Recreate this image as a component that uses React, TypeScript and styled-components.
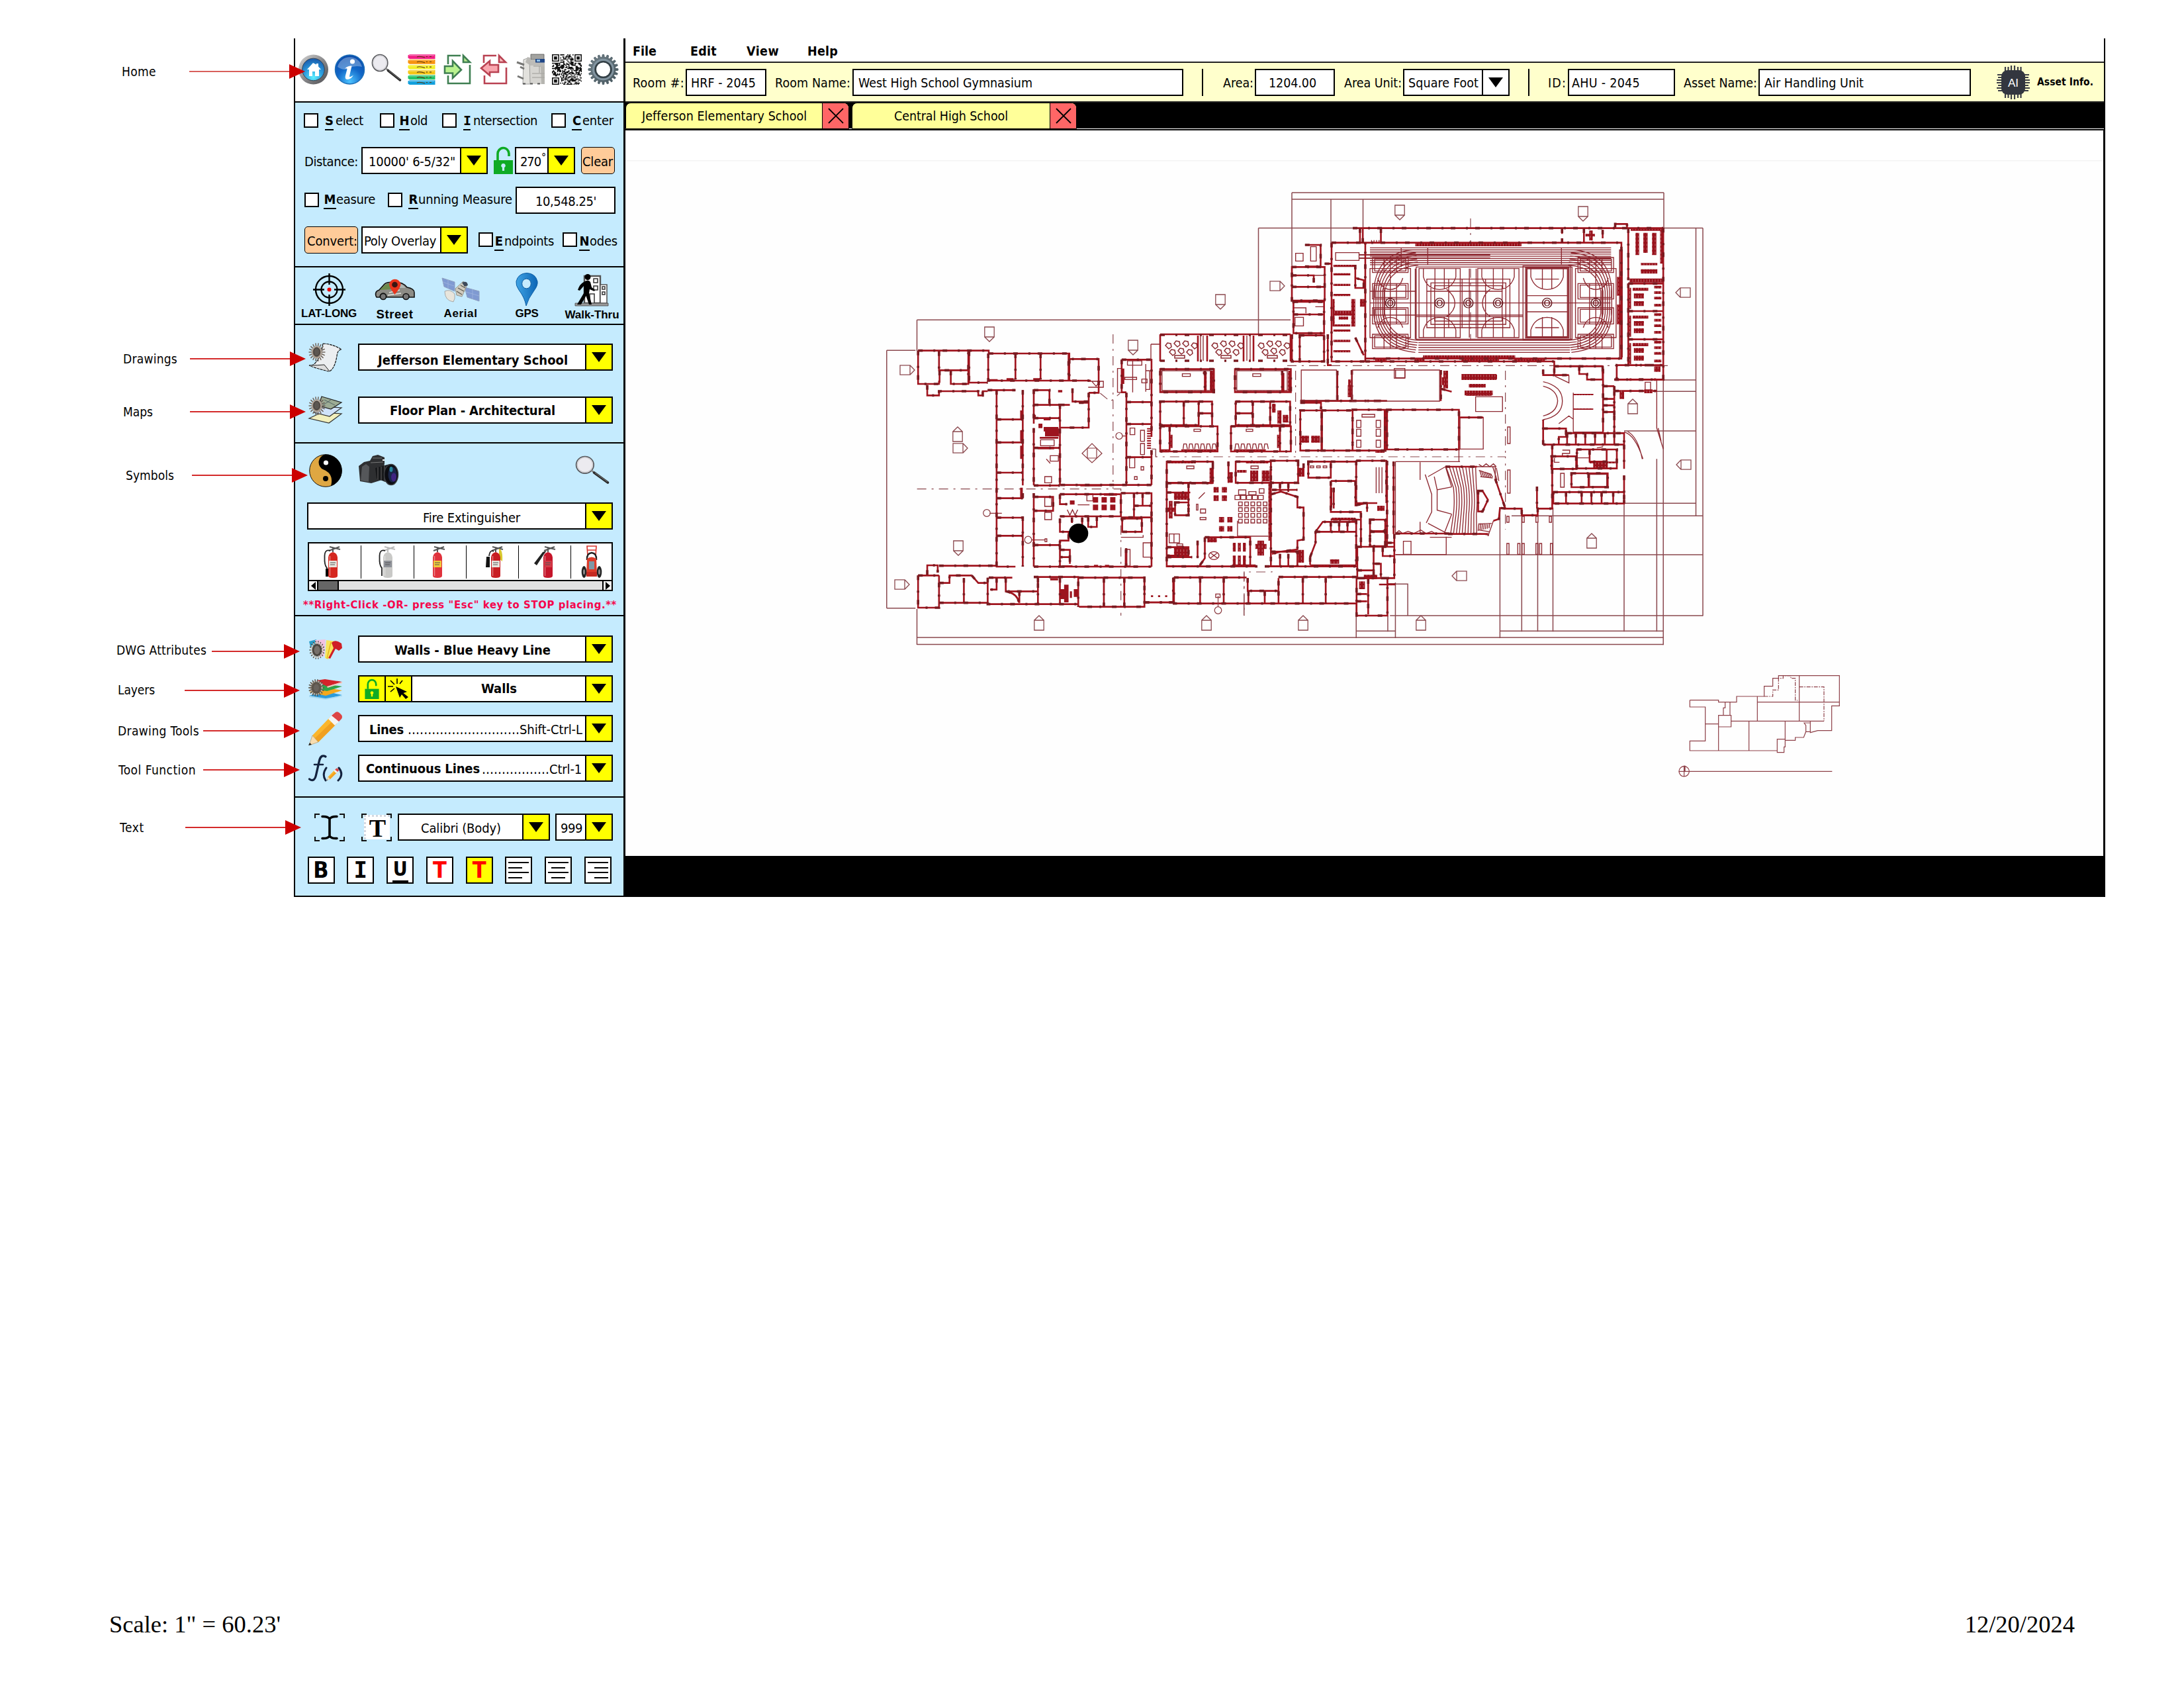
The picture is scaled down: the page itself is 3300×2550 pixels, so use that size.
import React, { useLayoutEffect, useRef, useState } from "react";
import styled, { createGlobalStyle, css } from "styled-components";

const GlobalStyle = createGlobalStyle`
  * { box-sizing: border-box; }
  body { margin: 0; background: #fff; color: #000; font-family: "DejaVu Sans Condensed", "DejaVu Sans", sans-serif; }
  svg { display: block; overflow: visible; flex: none; }
`;

/* ---------- text ---------- */

const Slot = styled.span<{ $w: number; $ml?: number; $dy?: number }>`
  display: block;
  flex: none;
  width: ${(p) => p.$w}px;
  margin-left: ${(p) => p.$ml ?? 0}px;
  padding-top: ${(p) => Math.max(0, (p.$dy ?? 0) * 2)}px;
  padding-bottom: ${(p) => Math.max(0, -(p.$dy ?? 0) * 2)}px;
  line-height: 1;
  white-space: pre;
`;

const Run = styled.span<{ $size: number; $bold?: boolean; $color?: string; $family?: string }>`
  display: inline-block;
  line-height: 1;
  font-size: ${(p) => p.$size}px;
  font-weight: ${(p) => (p.$bold ? 700 : 400)};
  color: ${(p) => p.$color ?? "#000"};
  ${(p) => p.$family && css`font-family: ${p.$family};`}
`;

type FitProps = {
  w: number;
  ml?: number;
  dy?: number;
  size?: number;
  bold?: boolean;
  color?: string;
  family?: string;
  children: string;
};

/* Tracks its text so that it fills the given width exactly. */
function Fit({ w, ml, dy, size = 20, bold, color, family, children }: FitProps) {
  const ref = useRef<HTMLSpanElement>(null);
  const [tracking, setTracking] = useState(0);
  useLayoutEffect(() => {
    const el = ref.current;
    if (!el) return;
    el.style.letterSpacing = "0px";
    setTracking((w - el.getBoundingClientRect().width) / Math.max(1, children.length));
  }, [w, children]);
  return (
    <Slot $w={w} $ml={ml} $dy={dy}>
      <Run ref={ref} $size={size} $bold={bold} $color={color} $family={family} style={{ letterSpacing: `${tracking}px` }}>
        {children}
      </Run>
    </Slot>
  );
}

const ARIAL = '"Liberation Sans", Arial, sans-serif';

/* ---------- page ---------- */

const Page = styled.main`
  width: 3300px;
  height: 2550px;
  padding-top: 58px;
  display: flex;
  flex-direction: column;
  background: #fff;
  overflow: hidden;
`;
const Workspace = styled.div`
  display: flex;
  height: 1297px;
  flex: none;
`;
const Footer = styled.footer`
  margin-top: 1078px;
  padding: 0 165px;
  display: flex;
  justify-content: space-between;
  font-family: "Liberation Serif", serif;
  font-size: 36.5px;
  line-height: 42px;
`;

/* ---------- callouts ---------- */

const CalloutColumn = styled.aside`
  width: 444px;
  flex: none;
  position: relative;
  z-index: 2;
`;
const CalloutRow = styled.div<{ $gap: number }>`
  display: flex;
  align-items: center;
  height: 24px;
  margin-top: ${(p) => p.$gap}px;
`;
const Shaft = styled.i<{ $w: number; $ml: number; $soft?: boolean }>`
  flex: none;
  height: 2px;
  width: ${(p) => p.$w}px;
  margin-left: ${(p) => p.$ml}px;
  background: ${(p) => (p.$soft ? "#d9605c" : "#d42a2a")};
`;
const Head = styled.i`
  flex: none;
  border-left: 24px solid #cc0000;
  border-top: 11.5px solid transparent;
  border-bottom: 11.5px solid transparent;
`;

const callouts = [
  { t: "Home", x: 184, w: 52, y: 108, from: 286, head: 437, dy: 0 },
  { t: "Drawings", x: 186, w: 82, y: 542, from: 287, head: 438, dy: 0 },
  { t: "Maps", x: 186, w: 45, y: 622, from: 287, head: 438, dy: 0 },
  { t: "Symbols", x: 190, w: 73, y: 718, from: 290, head: 441, dy: 0 },
  { t: "DWG Attributes", x: 176, w: 136, y: 984, from: 320, head: 429, dy: -1.5 },
  { t: "Layers", x: 178, w: 56, y: 1043, from: 279, head: 429, dy: -0.5 },
  { t: "Drawing Tools", x: 178, w: 123, y: 1104, from: 307, head: 429, dy: 0 },
  { t: "Tool Function", x: 179, w: 117, y: 1163, from: 307, head: 429, dy: 0 },
  { t: "Text", x: 181, w: 37, y: 1250, from: 280, head: 431, dy: 0 },
];

function Callouts() {
  let cursor = 58;
  return (
    <CalloutColumn>
      {callouts.map((c, i) => {
        const gap = c.y - 12 - cursor;
        cursor = c.y + 12;
        return (
          <CalloutRow key={c.t} $gap={gap}>
            <Fit w={c.w} ml={c.x} dy={c.dy} size={19}>{c.t}</Fit>
            <Shaft $ml={c.from - c.x - c.w} $w={c.head - c.from} $soft={i === 0} />
            <Head />
          </CalloutRow>
        );
      })}
    </CalloutColumn>
  );
}

/* ---------- controls ---------- */

const Sidebar = styled.nav`
  width: 501px;
  flex: none;
  background: #c5ebfe;
  border-left: 2px solid #000;
  border-right: 3px solid #000;
`;
const Section = styled.section<{ $h: number; $bg?: string; $pt?: number }>`
  height: ${(p) => p.$h}px;
  padding-top: ${(p) => p.$pt ?? 0}px;
  background: ${(p) => p.$bg ?? "transparent"};
  border-bottom: 2px solid #000;
`;
const Row = styled.div<{ $h?: number; $mt?: number; $pl?: number }>`
  display: flex;
  align-items: center;
  height: ${(p) => p.$h ?? 41}px;
  margin-top: ${(p) => p.$mt ?? 0}px;
  padding-left: ${(p) => p.$pl ?? 0}px;
`;
const Tools = styled.div`
  display: flex;
  gap: 9.75px;
  padding: 24px 0 0 5px;
`;
const Check = styled.i<{ $ml?: number }>`
  flex: none;
  width: 22px;
  height: 22px;
  margin-left: ${(p) => p.$ml ?? 0}px;
  background: #fff;
  border: 2px solid #000;
`;
const Box = styled.div<{ $w: number; $ml?: number }>`
  flex: none;
  display: flex;
  align-items: center;
  width: ${(p) => p.$w}px;
  height: 41px;
  margin-left: ${(p) => p.$ml ?? 0}px;
  background: #fff;
  border: 2px solid #000;
`;
const PeachButton = styled.button<{ $w: number; $ml?: number }>`
  flex: none;
  display: flex;
  align-items: center;
  width: ${(p) => p.$w}px;
  height: 41px;
  padding: 0;
  margin-left: ${(p) => p.$ml ?? 0}px;
  background: #ffcb99;
  border: 1.5px solid #000;
  border-radius: 5px;
  font-family: inherit;
`;
const DropCell = styled.span<{ $bg?: string }>`
  flex: none;
  display: flex;
  align-items: center;
  justify-content: center;
  width: 40px;
  height: 100%;
  margin-left: auto;
  background: ${(p) => p.$bg ?? "#ffff00"};
  border-left: 2px solid #000;
`;
const Caret = styled.i`
  border-top: 15px solid #000;
  border-left: 11.5px solid transparent;
  border-right: 11.5px solid transparent;
`;
const LeadCell = styled.span`
  flex: none;
  display: flex;
  align-items: center;
  justify-content: center;
  width: 40px;
  height: 100%;
  background: #ffff00;
  border-right: 2px solid #000;
`;
const IconSlot = styled.span<{ $w: number; $ml?: number }>`
  flex: none;
  display: flex;
  align-items: center;
  width: ${(p) => p.$w}px;
  height: 41px;
  margin-left: ${(p) => p.$ml ?? 0}px;
`;

function Select({ w, ml, bg, children }: { w: number; ml?: number; bg?: string; children: React.ReactNode }) {
  return (
    <Box $w={w} $ml={ml}>
      {children}
      <DropCell $bg={bg}><Caret /></DropCell>
    </Box>
  );
}

const HotWrap = styled.span<{ $ml: number; $dy: number }>`
  flex: none;
  display: flex;
  margin-left: ${(p) => p.$ml}px;
  padding-top: ${(p) => Math.max(0, p.$dy * 2)}px;
  padding-bottom: ${(p) => Math.max(0, -p.$dy * 2)}px;
`;
const HotKey = styled.b<{ $w: number; $slab?: boolean }>`
  width: ${(p) => p.$w}px;
  flex: none;
  text-align: center;
  font-size: 20px;
  line-height: 20px;
  border-bottom: 2px solid #000;
  height: 25px;
  margin-bottom: -5px;
  ${(p) => p.$slab && css`font-family: "DejaVu Sans Mono", monospace;`}
`;
function Hot({ k, kw, gap, rest, w, ml, dy = 0 }: { k: string; kw: number; gap: number; rest: string; w: number; ml: number; dy?: number }) {
  return (
    <HotWrap $ml={ml} $dy={dy}>
      <HotKey $w={kw} $slab={k === "I"}>{k}</HotKey>
      <Fit w={w} ml={gap}>{rest}</Fit>
    </HotWrap>
  );
}

/* ---------- icons ---------- */

const gearPath = (cx: number, cy: number, r1: number, r2: number, n: number, ky = 1) => {
  let d = "";
  for (let i = 0; i < n; i++) {
    [[-0.3, r1], [-0.17, r2], [0.17, r2], [0.3, r1]].forEach(([o, r], j) => {
      const a = ((i + o) / n) * Math.PI * 2;
      d += `${i + j === 0 ? "M" : "L"}${(cx + Math.cos(a) * r).toFixed(2)} ${(cy + Math.sin(a) * r * ky).toFixed(2)}`;
    });
  }
  return d + "Z";
};

const HomeIcon = () => (
  <svg width="45" height="46" viewBox="0 0 45 46">
    <defs>
      <linearGradient id="hr" x1="0" y1="0" x2="1" y2="1"><stop offset="0" stopColor="#d8d8d8" /><stop offset=".5" stopColor="#8a8a8c" /><stop offset="1" stopColor="#4c4c50" /></linearGradient>
      <radialGradient id="hb" cx=".5" cy=".85" r=".8"><stop offset="0" stopColor="#5ff0ff" /><stop offset=".5" stopColor="#2da0e0" /><stop offset="1" stopColor="#1a5fb0" /></radialGradient>
    </defs>
    <circle cx="22.5" cy="23" r="22.5" fill="url(#hr)" />
    <circle cx="22.5" cy="23" r="16.8" fill="url(#hb)" stroke="#345" />
    <path d="M22 13l-9 10h3v10h5v-7h4v7h6V23h3l-4-4.500v-4.500h-3v1.500z" fill="#fff" />
  </svg>
);
const InfoIcon = () => (
  <svg width="45" height="46" viewBox="0 0 45 46">
    <defs><radialGradient id="ib" cx=".5" cy=".9" r=".9"><stop offset="0" stopColor="#4cc3ff" /><stop offset=".5" stopColor="#1268c8" /><stop offset="1" stopColor="#0a48a8" /></radialGradient></defs>
    <circle cx="22.500" cy="23" r="22" fill="url(#ib)" stroke="#1d6fb8" strokeWidth="1.500" />
    <path d="M4 19A19 19 0 0 1 41 19Q30 16 22 21T4 19Z" fill="#fff" opacity=".3" />
    <circle cx="26.500" cy="11" r="3.600" fill="#fff" />
    <path d="M15 21.500Q20 17 25.500 17.500L22 33Q21.500 36 28 31.500Q24 38.500 18.500 38Q14.500 37.500 16 32L18.500 22.500Q19 20.500 15 21.500Z" fill="#fff" />
  </svg>
);
const Magnifier = ({ w, h }: { w: number; h: number }) => (
  <svg width={w} height={h} viewBox="0 0 48 42" preserveAspectRatio="none">
    <circle cx="14" cy="13" r="12.500" fill="#ecebf0" stroke="#55565a" strokeWidth="1.600" />
    <circle cx="14" cy="13" r="10.800" fill="none" stroke="#c8c8cc" />
    <path d="M23 21l5 4" stroke="#888" strokeWidth="2.500" />
    <path d="M27 24.500L46.500 39" stroke="#2a2a2a" strokeWidth="3.600" strokeLinecap="round" />
    <path d="M28 24.500L46 38" stroke="#777" strokeWidth="1" />
  </svg>
);
const MarkersIcon = () => (
  <svg width="45" height="46" viewBox="0 0 45 46">
    {["#f21d84", "#f7930f", "#f3ef27", "#f6c515", "#25c36a", "#12a0dc"].map((c, i) => (
      <g key={c} transform={`translate(0 ${i * 7.8})`}>
        <path d="M1.500 1.500L4 .3H42.500V7H4L1.500 5.500Z" fill={c} />
        <path d="M3 1.700H41" stroke="#fff" strokeWidth="1.200" opacity=".4" />
        <path d="M15 4q4 -2 12 1M29 3.500h2M34 3.500h3" stroke="#5a3a10" strokeWidth="1.100" fill="none" />
      </g>
    ))}
  </svg>
);
const ExportIcon = () => (
  <svg width="45" height="46" viewBox="0 0 45 46">
    <g fill="none" stroke="#3f7f52" strokeWidth="2.600">
      <path d="M7 15V2H26M40 16V44H7V32" />
      <path d="M30 2L40 12H30Z" fill="#b9e88f" />
      <path d="M2 18H14V10L27 23.500L14 36V28.500H2Z" fill="#b9f28f" />
    </g>
  </svg>
);
const ImportIcon = () => (
  <svg width="45" height="46" viewBox="0 0 45 46">
    <g fill="none" stroke="#b94252" strokeWidth="2.600">
      <path d="M6 13V2H25M40 20V44H7V32" />
      <path d="M29 2L39 12H29Z" fill="#fbc0c0" />
      <path d="M28 16H15V10L2 21L15 32V27H28Z" fill="#f9a6ae" />
    </g>
  </svg>
);
const CopierIcon = () => (
  <svg width="45" height="46" viewBox="0 0 45 46">
    <path d="M22 0H42V8H22Z" fill="#a3a3a0" stroke="#555" strokeWidth=".8" />
    <path d="M20 8H43V18H21Z" fill="#bdbcb8" />
    <path d="M29 7H43V12.500H29Z" fill="#1f4686" />
    <path d="M31 8H36V11H31Z" fill="#8fc0e8" />
    <path d="M19 17H43V45H21Z" fill="#d6d5d1" />
    <path d="M26 18H43M24 29H43M24 35H43M35 18V28" stroke="#9c9b97" strokeWidth="1" />
    <path d="M37 19H43V45H38Z" fill="#a8a7a3" opacity=".7" />
    <path d="M11 8L20 5L21 45H10Z" fill="#e2e1dd" stroke="#8c8c8a" strokeWidth=".8" />
    <path d="M17 4L22 6L20 16L14 12Z" fill="#b9b8b4" />
    <path d="M1 12L12 16M6 19L12 22M2 33L11 37" stroke="#777775" strokeWidth="3" />
    <path d="M10 44.500H43" stroke="#555" strokeWidth="2" strokeDasharray="4 7" />
  </svg>
);
const qrCells = (() => {
  let d = "";
  const n = 29;
  const finder = (x: number, y: number) => (x < 8 && y < 8) || (x > n - 9 && y < 8) || (x < 8 && y > n - 9);
  let s = 71;
  for (let y = 0; y < n; y++)
    for (let x = 0; x < n; x++) {
      s = (s * 1103515245 + 12345) % 2147483648;
      if (!finder(x, y) && (s >> 12) % 100 < 55) d += `M${x} ${y}h1.050v1.050h-1.050z`;
    }
  [[0, 0], [n - 7, 0], [0, n - 7]].forEach(([x, y]) => {
    d += `M${x} ${y}h7v7h-7zM${x + 1} ${y + 1}v5h5v-5zM${x + 2} ${y + 2}h3v3h-3z`;
  });
  return d;
})();
const QrIcon = () => (
  <svg width="45" height="46" viewBox="0 0 29 29" preserveAspectRatio="none"><path d={qrCells} fill="#111" /></svg>
);
const GearIcon = () => (
  <svg width="45" height="46" viewBox="0 0 45 46">
    <defs><linearGradient id="gg" x1="0" y1="0" x2="1" y2="1"><stop offset="0" stopColor="#75848c" /><stop offset="1" stopColor="#43535a" /></linearGradient></defs>
    <path d={gearPath(22.5, 23, 18.5, 22.5, 20)} fill="url(#gg)" stroke="#55656d" />
    <circle cx="22.500" cy="23" r="14.800" fill="none" stroke="#8294a0" strokeWidth="3" />
    <circle cx="22.500" cy="23" r="11.800" fill="none" stroke="#333f45" strokeWidth="2.600" />
    <circle cx="22.500" cy="23" r="10.500" fill="#fff" />
  </svg>
);
const Lock = ({ w, h, hole }: { w: number; h: number; hole: string }) => (
  <svg width={w} height={h} viewBox="0 0 29 41">
    <path d="M6 20V11A8.500 9 0 0 1 23 10V14" fill="none" stroke="#0fab24" strokeWidth="3.600" />
    <path d="M0 20H29V41H0Z" fill="#0fab24" />
    <path d="M14.500 25a3.200 3.200 0 0 1 1.600 6V36h-3.200V31a3.200 3.200 0 0 1 1.600-6z" fill={hole} />
  </svg>
);
const ReticleIcon = () => (
  <svg width="49" height="51" viewBox="0 0 49 51">
    <g fill="none" stroke="#000" strokeWidth="2.400"><circle cx="24.500" cy="25.500" r="20.500" /><circle cx="24.500" cy="25.500" r="12" />
      <path d="M24.500 1V18M24.500 33V50M0 25.500H17M32 25.500H49" /></g>
    <circle cx="24.500" cy="25.500" r="3" fill="#e00" />
  </svg>
);
const CarIcon = () => (
  <svg width="61" height="51" viewBox="0 0 61 51">
    <path d="M2 35Q0 28 7 26L15 17Q18 14 30 14Q43 14 49 22Q60 24 60 30V37H52A5 6 0 0 0 43 37H18A5 6 0 0 0 8 37H3Z" fill="#8d8c86" stroke="#111" strokeWidth="1.600" />
    <path d="M8 26L16 18Q20 16 25 16V25Z" fill="#6d8a4c" />
    <path d="M36 16Q43 17 47 23H37Z" fill="#b0b5b2" />
    <path d="M22 30L38 26M20 34L40 31" stroke="#e5e5e0" strokeWidth="1.400" />
    <circle cx="13" cy="36" r="4.500" fill="#777" stroke="#111" strokeWidth="1.600" /><circle cx="47.500" cy="36" r="4.500" fill="#777" stroke="#111" strokeWidth="1.600" />
    <path d="M30.500 33Q22 22 22 17.500A8.800 8.800 0 0 1 39.500 17.500Q39.500 22 30.500 33Z" fill="#e8341c" />
    <circle cx="30.500" cy="18" r="4.300" fill="#3a1512" />
  </svg>
);
const SatelliteIcon = () => (
  <svg width="56" height="51" viewBox="0 0 56 51">
    <path d="M0 8L19 14V28L3 21Z" fill="#7f9ad2" stroke="#8fa0c0" /><path d="M34 22L56 28V43L38 37Z" fill="#7f9ad2" stroke="#8fa0c0" />
    <path d="M1 14L18 20M9 10V24M36 29L56 35M46 25V40" stroke="#9fb4dd" strokeWidth=".8" />
    <path d="M20 24L32 13L38 18L30 36L22 34Z" fill="#cfcabd" stroke="#88857a" strokeWidth=".8" />
    <path d="M30 15Q38 11 39 19L34 21Z" fill="#3e4a5a" /><path d="M24 23L33 28M28 19L35 23M22 28L30 33" stroke="#5d5a50" strokeWidth="1.400" />
    <path d="M4 28Q12 24 19 32Q20 40 17 44Q4 42 4 28Z" fill="#e8e5dc" stroke="#999" strokeWidth=".8" />
  </svg>
);
const PinIcon = () => (
  <svg width="34" height="51" viewBox="0 0 34 51">
    <defs><linearGradient id="pg"><stop offset="0" stopColor="#3fa3e4" /><stop offset="1" stopColor="#0c65b5" /></linearGradient></defs>
    <path d="M16 50Q14 38 5 26Q0 19 1 13Q4 1 17 .5Q30 1 33 13Q34 19 28 27Q19 39 16 50Z" fill="url(#pg)" stroke="#0a5ca4" />
    <ellipse cx="16.500" cy="16.500" rx="6.800" ry="7.400" fill="#c5ebfe" stroke="#0b589c" />
  </svg>
);
const WalkIcon = () => (
  <svg width="51" height="51" viewBox="0 0 51 51">
    <path d="M14 5H38V46H14Z" fill="#fff" stroke="#555" strokeWidth="2.400" /><path d="M38 18H48V46H38Z" fill="#fff" stroke="#555" strokeWidth="1.600" />
    <g fill="#fff" stroke="#333" strokeWidth="1.500"><path d="M28 9h6v6h-6zM28 20h6v6h-6zM41 21h4v4h-4zM41 29h4v4h-4zM22 32h7v14h-7z" /></g>
    <path d="M0 46H50V50H0Z" fill="#999" stroke="#444" strokeWidth=".8" />
    <circle cx="19" cy="6.500" r="4.500" /><path d="M13 14Q20 9 23 14L25 22L30 26L29 28L22 25L21 31L25 48H21L16.500 35L9 48H3L13 31V20L7 27L4 26Q7 17 13 14Z" />
  </svg>
);

const SmallGear = () => (
  <>
    <path d={gearPath(13, 14, 7.5, 12.5, 18, 1.1)} fill="#6f645b" />
    <ellipse cx="12.500" cy="14" rx="7" ry="8.500" fill="none" stroke="#b0a498" strokeWidth="2" />
    <ellipse cx="12.500" cy="13.500" rx="4.500" ry="6.200" fill="#5c5651" stroke="#3f3935" />
  </>
);
const DrawingsIcon = () => (
  <svg width="51" height="44" viewBox="0 0 51 44">
    <path d="M22 1Q38 2 50 10Q44 10 43 20Q40 38 32 43Q16 40 1 34Q12 36 20 12Z" fill="#eceef0" stroke="#111" strokeWidth="1.200" strokeDasharray="4 1" />
    <path d="M1 34Q14 34 24 33L32 43" fill="#ddd" stroke="#222" />
    <SmallGear />
  </svg>
);
const MapsIcon = () => (
  <svg width="51" height="42" viewBox="0 0 51 42">
    <path d="M1 33L20 24L50 26L31 40Z" fill="#f2efbd" stroke="#333" strokeWidth="1.200" />
    <path d="M8 24L20 15L50 17L32 30Z" fill="#cfe2fa" stroke="#333" strokeWidth="1.200" />
    <path d="M20 0L50 9L34 19L16 14Z" fill="#9cab94" stroke="#222" strokeWidth="1.200" /><path d="M24 5L40 13M34 5L22 13" stroke="#566" />
    <SmallGear />
  </svg>
);
const YinYang = () => (
  <svg width="50" height="50" viewBox="0 0 50 50">
    <circle cx="25" cy="25" r="24.300" fill="#dfa742" stroke="#111" />
    <path d="M25 .5A24.500 24.500 0 0 1 33 48.200Q36 37 31 30Q28 26 22 23.500A12 12 0 0 1 25 .5Z" />
    <circle cx="25.500" cy="13" r="3.600" fill="#fff" /><circle cx="25" cy="37" r="4" />
  </svg>
);
const CameraIcon = () => (
  <svg width="61" height="47" viewBox="0 0 61 47">
    <path d="M1 17L9 11L18 9L22 2L30 0L40 4V13L36 38L20 43L3 40Z" fill="#2e2f31" />
    <path d="M6 18L12 14L17 18L16 41L4 39Z" fill="#55575a" /><path d="M22 5L36 5M19 12L38 11" stroke="#777" strokeWidth="1.200" />
    <path d="M26 20L48 14L50 44L28 36Z" fill="#17181a" /><path d="M30 19V37M35 18V39M40 17V41" stroke="#555" strokeWidth="1.200" />
    <ellipse cx="50" cy="30" rx="10.500" ry="15.500" fill="#0c0d12" stroke="#3a3c40" strokeWidth="1.500" />
    <ellipse cx="52" cy="30" rx="6.500" ry="11.500" fill="#1a2548" /><ellipse cx="54" cy="34" rx="4" ry="6.500" fill="#3f2480" /><ellipse cx="50" cy="22" rx="2.500" ry="4" fill="#27879c" />
    <path d="M37 7h3v2h-3z" fill="#fff" />
  </svg>
);
const FansIcon = () => (
  <svg width="51" height="32" viewBox="0 0 51 32">
    <path d="M1 4L12 1L12 10L3 12Z" fill="#2a9dc9" /><path d="M10 2L26 1L24 26L16 28Z" fill="#f3c3e2" />
    <path d="M27 2L42 4L40 12L30 31L25 29Z" fill="#f8e45c" /><path d="M34 5L28 30" stroke="#e0b010" strokeWidth="1.200" />
    <path d="M35 6Q40 0 50 7L51 14L46 18L41 15L33 30L30 29L38 14Z" fill="#cf1f27" />
    <g transform="translate(2 2)"><path d={gearPath(11, 15, 7.5, 11.5, 18, 1.2)} fill="#4b463f" /><ellipse cx="11" cy="15" rx="8.500" ry="11" fill="none" stroke="#d8cfc0" strokeWidth="2.500" strokeDasharray="1.800 1.500" /><ellipse cx="11" cy="15" rx="4.500" ry="6.500" fill="#77706a" /></g>
  </svg>
);
const LayersIcon = () => (
  <svg width="51" height="32" viewBox="0 0 51 32">
    <path d="M1 26L25 19L51 25L26 31Z" fill="#2d9cdb" /><path d="M1 28L26 32L51 27V26L26 30L1 26Z" fill="#a7d9f2" />
    <path d="M1 20L25 13L51 18L26 26Z" fill="#f5a81c" /><path d="M1 14L25 8L51 12L28 19Z" fill="#2fa34a" />
    <path d="M12 3L25 1L51 5L28 12Z" fill="#d4232b" /><path d="M28 12L51 5V7L29 14Z" fill="#f4c9c0" />
    <g transform="translate(0 -1)"><path d={gearPath(12, 15, 8, 12, 18, 1.1)} fill="#5d554c" /><ellipse cx="12" cy="15" rx="8.500" ry="10" fill="none" stroke="#b8ad9f" strokeWidth="2.200" strokeDasharray="1.800 1.500" /><ellipse cx="12" cy="15" rx="4" ry="5.500" fill="#6a635d" /></g>
  </svg>
);
const pencilShape = (
  <>
    <path d="M6 36L33 8L43 18L15 46Z" fill="#fbb62c" /><path d="M10 40L38 13L43 18L15 46Z" fill="#f0a020" />
    <path d="M30 11L36 5L46 15L40 21Z" fill="#f4f4f4" /><path d="M35 6L41 1Q44 -1 47 2L50 5Q52 8 50 11L46 15Z" fill="#dd4444" />
    <path d="M6 36L15 46L1 51Z" fill="#f8ddb0" stroke="#a98a50" strokeWidth=".6" /><path d="M2 47L5 50L0 51Z" fill="#222" />
  </>
);
const PencilIcon = () => <svg width="51" height="51" viewBox="0 0 51 51">{pencilShape}</svg>;
const FunctionIcon = () => (
  <svg width="51" height="41" viewBox="0 0 51 41">
    <g fill="none" stroke="#14233f" strokeLinecap="round">
      <path d="M26 3Q19 -1 16.500 9L11.500 31Q9 42 1.500 37" strokeWidth="3.300" /><path d="M9 15H22" strokeWidth="2.600" />
      <path d="M27 20Q20 30 26 39M46 20Q54 30 45 39" strokeWidth="3" />
    </g>
    <g transform="translate(27.500 20.500) scale(.36)">{pencilShape}</g>
  </svg>
);
const corners = "M1 7V1H8M38 1H45V7M45 35V41H38M8 41H1V35";
const CursorIcon = () => (
  <svg width="46" height="42" viewBox="0 0 46 42">
    <path d={corners} fill="none" stroke="#111" strokeWidth="2" />
    <path d="M12 4.500Q20 4 23 8Q26 4 34 4.500M23 8V34M12 37.500Q20 38 23 34Q26 38 34 37.500" fill="none" stroke="#000" strokeWidth="3.600" strokeLinecap="round" />
  </svg>
);
const GlyphBadge = styled.span`
  width: 39px;
  height: 37px;
  background: #fff;
  border: 3px dotted #d4d8e0;
  border-right: 0;
  border-bottom: 0;
  font: 700 38px/42px "Liberation Serif", serif;
  display: flex;
  align-items: center;
  justify-content: center;
`;
const CornerFrame = styled.span`
  display: flex;
  align-items: center;
  justify-content: center;
  width: 46px;
  height: 42px;
  flex: none;
  background:
    linear-gradient(#111, #111) 0 0 / 8px 2px, linear-gradient(#111, #111) 0 0 / 2px 7px,
    linear-gradient(#111, #111) 100% 0 / 8px 2px, linear-gradient(#111, #111) 100% 0 / 2px 7px,
    linear-gradient(#111, #111) 0 100% / 8px 2px, linear-gradient(#111, #111) 0 100% / 2px 7px,
    linear-gradient(#111, #111) 100% 100% / 8px 2px, linear-gradient(#111, #111) 100% 100% / 2px 7px;
  background-repeat: no-repeat;
`;
const PointerIcon = () => (
  <svg width="32" height="32" viewBox="0 0 32 32">
    <g stroke="#000" strokeWidth="1.600"><path d="M14 0V8M4 3L10 9M0 12H8M4 20L10 15M22 3L18 8" /></g>
    <path d="M12 12L29 20L23.500 22L31 28L27 31L21 24L18 29Z" />
  </svg>
);
const ChipIcon = () => (
  <svg width="50" height="51" viewBox="0 0 50 51">
    <path d="M13 2V49M17.500 2V49M22 0V51M27 0V51M32 2V49M36.500 2V49M1 14H49M2 18H48M0 22H50M0 26H50M2 30H48M0 34H50M2 38H48" stroke="#3b3d45" strokeWidth="2.200" />
    <rect x="7" y="7" width="36" height="37" rx="9" fill="#33363f" />
    <text x="25" y="32" textAnchor="middle" fontFamily="Liberation Sans" fontSize="17" fontWeight="400" fill="#fff">AI</text>
  </svg>
);

/* ---------- symbol strip ---------- */

const Strip = styled.div`
  width: 461px;
  height: 74px;
  margin: 19px 0 0 19px;
  background: #fff;
  border: 2px solid #000;
  display: flex;
  flex-direction: column;
`;
const Thumbs = styled.div`
  display: grid;
  grid-template-columns: 79px 79.5px 79px 79px 79.5px 1fr;
  height: 55px;
  padding: 3px 0;
`;
const Thumb = styled.span`
  display: flex;
  justify-content: center;
  &:not(:last-child) { border-right: 1.5px solid #000; }
`;
const ScrollBar = styled.div`
  display: flex;
  height: 16px;
  background: #e2e1e1;
  border-top: 2px solid #000;
`;
const ScrollEnd = styled.span<{ $right?: boolean }>`
  width: 14px;
  display: flex;
  align-items: center;
  justify-content: center;
  background: #f4f4f4;
  margin-left: ${(p) => (p.$right ? "auto" : 0)};
  border-${(p) => (p.$right ? "left" : "right")}: 2px solid #000;
  &::before {
    content: "";
    border-top: 6px solid transparent;
    border-bottom: 6px solid transparent;
    border-${(p) => (p.$right ? "left" : "right")}: 7px solid #000;
  }
`;
const ScrollThumb = styled.i`
  width: 31px;
  background: #666;
  border-right: 2px solid #000;
`;

function Extinguisher({ body, label, hose, horn, shift = 0 }: { body: string; label: string; hose?: boolean; horn?: "side" | "cone"; shift?: number }) {
  return (
    <svg width="30" height="50" viewBox="0 0 30 50">
      <g transform={`translate(${shift} 0)`}>
        <path d="M12 2L28 6M11 8L27 2M17 4V10" stroke={hose && body === "#c9c9c7" ? "#bbb" : "#555"} strokeWidth="2" fill="none" />
        {horn === "side" && <path d="M22 5Q28 6 27 24L22 20Z" fill="#d8c92e" />}
        <path d="M10 18Q11 11 17 10Q23 11 24 18V46Q24 49 17 49Q10 49 10 46Z" fill={body} />
        <path d="M12.500 16V46" stroke="#fff" strokeWidth="1.500" opacity=".4" />
        <path d="M11 23H23V33H11Z" fill={label} /><path d="M13 26H21M13 29H20" stroke="#555" strokeWidth="1" />
        {hose && <path d="M13 8Q4 5 4.500 18Q4 30 8 34V46" fill="none" stroke="#222" strokeWidth="1.800" />}
        {hose && body !== "#c9c9c7" && <path d="M6 35h4v12h-4z" />}
        {horn === "side" && <path d="M14 9Q8 6 7 16" fill="none" stroke="#222" strokeWidth="1.600" />}
        {horn === "side" && <path d="M3 17H8V33H2Z" fill="#111" />}
        {horn === "cone" && <path d="M15 8L9 10L-4 27L0 30L11 13" fill="#222" />}
      </g>
    </svg>
  );
}
const CartExtinguisher = () => (
  <svg width="32" height="50" viewBox="0 0 32 50">
    <path d="M10 16L9 1H23L22 16M10 7H22" fill="none" stroke="#d8322a" strokeWidth="1.600" />
    <path d="M9 22Q8 12 16 11Q24 12 23 22" fill="none" stroke="#222" strokeWidth="2.500" />
    <path d="M9 20Q16 15 23 20L24 44H8Z" fill="#dd3b2a" /><path d="M12 24H20V36H12Z" fill="#7f98a6" />
    <ellipse cx="4.500" cy="40" rx="3.800" ry="9" fill="#222" /><ellipse cx="27.500" cy="40" rx="3.800" ry="9" fill="#222" />
    <ellipse cx="4.500" cy="40" rx="1.500" ry="4" fill="#8a8a8a" /><ellipse cx="27.500" cy="40" rx="1.500" ry="4" fill="#8a8a8a" />
    <path d="M8 40H24V47H8Z" fill="#c52a22" />
  </svg>
);

/* ---------- sidebar ---------- */

const GeoGrid = styled.div`
  display: grid;
  grid-template-columns: 100px 99px 100px 100px 97px;
  padding: 8px 0 0 1px;
`;
const GeoItem = styled.div`
  display: flex;
  flex-direction: column;
  align-items: center;
`;
const Between = styled.div`
  display: flex;
  align-items: flex-start;
  height: 54px;
  padding: 20px 0 0 21px;
`;
const FormatRow = styled.div`
  display: flex;
  gap: 18.8px;
  padding: 24px 0 0 18.5px;
`;
const FormatButton = styled.button<{ $bg?: string; $color?: string; $size?: number; $slab?: boolean }>`
  width: 41px;
  height: 41px;
  flex: none;
  display: flex;
  align-items: center;
  justify-content: center;
  padding: 0;
  background: ${(p) => p.$bg ?? "#fff"};
  color: ${(p) => p.$color ?? "#000"};
  border: 2px solid #000;
  font-family: ${(p) => (p.$slab ? '"DejaVu Sans Mono", monospace' : '"DejaVu Sans Condensed", sans-serif')};
  font-weight: 700;
  font-size: ${(p) => p.$size ?? 34}px;
  line-height: 37px;
`;
const UnderBar = styled.span`
  height: 36px;
  line-height: 32px;
  padding: 0 1px;
  border-bottom: 3px solid #000;
`;
const Lines = styled.span<{ $align: string }>`
  width: 31px;
  display: flex;
  flex-direction: column;
  align-items: ${(p) => p.$align};
  gap: 5.7px;
`;
const Bar = styled.i<{ $w: number }>`
  height: 1.8px;
  width: ${(p) => p.$w}px;
  background: #000;
`;

function Align({ to }: { to: string }) {
  return (
    <FormatButton>
      <Lines $align={to}><Bar $w={31} /><Bar $w={21} /><Bar $w={31} /><Bar $w={21} /></Lines>
    </FormatButton>
  );
}

function SidebarPanel() {
  return (
    <Sidebar>
      <Section $h={97} $bg="#fff">
        <Tools>
          <HomeIcon /><InfoIcon /><Magnifier w={45} h={42} /><MarkersIcon /><ExportIcon /><ImportIcon /><CopierIcon /><QrIcon /><GearIcon />
        </Tools>
      </Section>

      <Section $h={249} $pt={7}>
        <Row $h={40} $pl={13}>
          <Check /><Hot ml={10} k="S" kw={13} gap={3} rest="elect" w={42} dy={-0.5} />
          <Check $ml={25} /><Hot ml={7} k="H" kw={16} gap={1} rest="old" w={26} dy={-0.5} />
          <Check $ml={22} /><Hot ml={10} k="I" kw={11} gap={4} rest="ntersection" w={97} dy={-0.5} />
          <Check $ml={21} /><Hot ml={9} k="C" kw={15} gap={1} rest="enter" w={47} dy={-0.5} />
        </Row>
        <Row $h={40} $mt={20} $pl={14}>
          <Fit w={81} dy={1.5}>Distance:</Fit>
          <Select w={191} ml={5}><Fit w={131} ml={9} dy={2}>{"10000' 6-5/32\""}</Fit></Select>
          <IconSlot $w={29} $ml={9}><Lock w={29} h={41} hole="#c5ebfe" /></IconSlot>
          <Select w={91} ml={3}><Fit w={31} ml={6} dy={2}>270</Fit><Fit w={7} ml={1} dy={-4} size={16}>°</Fit></Select>
          <PeachButton $w={51} $ml={9}><Fit w={46} ml={1} dy={2}>Clear</Fit></PeachButton>
        </Row>
        <Row $h={40} $mt={20} $pl={14}>
          <Check /><Hot ml={7} k="M" kw={19} gap={0} rest="easure" w={59} dy={-1} />
          <Check $ml={19} /><Hot ml={9} k="R" kw={15} gap={0} rest="unning Measure" w={142} dy={-1} />
          <Box $w={151} $ml={5}><Fit w={92} ml={28} dy={2}>10,548.25'</Fit></Box>
        </Row>
        <Row $h={40} $mt={20} $pl={14}>
          <PeachButton $w={81}><Fit w={76} ml={3} dy={2}>Convert:</Fit></PeachButton>
          <Select w={161} ml={5}><Fit w={109} ml={2} dy={2}>Poly Overlay</Fit></Select>
          <Check $ml={16} /><Hot ml={2} k="E" kw={14} gap={1} rest="ndpoints" w={75} dy={2} />
          <Check $ml={13} /><Hot ml={3} k="N" kw={16} gap={0} rest="odes" w={42} dy={2} />
        </Row>
      </Section>

      <Section $h={87}>
        <GeoGrid>
          <GeoItem><ReticleIcon /><Fit w={84} dy={1} size={17} bold family={ARIAL}>LAT-LONG</Fit></GeoItem>
          <GeoItem><CarIcon /><Fit w={56} dy={1.5} size={18.5} bold family={ARIAL}>Street</Fit></GeoItem>
          <GeoItem><SatelliteIcon /><Fit w={51} dy={1} size={17} bold family={ARIAL}>Aerial</Fit></GeoItem>
          <GeoItem><PinIcon /><Fit w={35} dy={1} size={17} bold family={ARIAL}>GPS</Fit></GeoItem>
          <GeoItem><WalkIcon /><Fit w={82} dy={2} size={17} bold family={ARIAL}>Walk-Thru</Fit></GeoItem>
        </GeoGrid>
      </Section>

      <Section $h={179} $pt={28}>
        <Row $pl={20}>
          <IconSlot $w={51}><DrawingsIcon /></IconSlot>
          <Select w={385} ml={24}><Fit w={286} ml={28} dy={4} bold>Jefferson Elementary School</Fit></Select>
        </Row>
        <Row $pl={20} $mt={39}>
          <IconSlot $w={51}><MapsIcon /></IconSlot>
          <Select w={385} ml={24}><Fit w={250} ml={46} dy={0.5} bold>Floor Plan - Architectural</Fit></Select>
        </Row>
      </Section>

      <Section $h={261}>
        <Between>
          <IconSlot $w={50}><YinYang /></IconSlot>
          <IconSlot $w={61} $ml={24}><CameraIcon /></IconSlot>
          <IconSlot $w={51} $ml={267}><Magnifier w={51} h={43} /></IconSlot>
        </Between>
        <Row $pl={18} $mt={35}>
          <Select w={462}><Fit w={147} ml={173} dy={2}>Fire Extinguisher</Fit></Select>
        </Row>
        <Strip>
          <Thumbs>
            <Thumb><Extinguisher body="#d5271f" label="#e8e4dc" hose shift={-5} /></Thumb>
            <Thumb><Extinguisher body="#c9c9c7" label="#8f9299" hose shift={-1} /></Thumb>
            <Thumb><Extinguisher body="#e0323c" label="#f0c93a" shift={-6} /></Thumb>
            <Thumb><Extinguisher body="#c81e22" label="#e8e4dc" horn="side" shift={3} /></Thumb>
            <Thumb><Extinguisher body="#c5152a" label="#d43a48" horn="cone" shift={3} /></Thumb>
            <Thumb><CartExtinguisher /></Thumb>
          </Thumbs>
          <ScrollBar><ScrollEnd /><ScrollThumb /><ScrollEnd $right /></ScrollBar>
        </Strip>
        <Row $h={38} $pl={12}>
          <Fit w={474} size={16.5} dy={2} bold color="#f5054b">{'**Right-Click -OR- press "Esc" key to STOP placing.**'}</Fit>
        </Row>
      </Section>

      <Section $h={274} $pt={29}>
        <Row $pl={20}>
          <IconSlot $w={51}><FansIcon /></IconSlot>
          <Select w={385} ml={24}><Fit w={236} ml={53} dy={1} bold>Walls - Blue Heavy Line</Fit></Select>
        </Row>
        <Row $pl={20} $mt={19}>
          <IconSlot $w={51}><LayersIcon /></IconSlot>
          <Select w={385} ml={24}>
            <LeadCell><Lock w={22} h={30} hole="#ffff00" /></LeadCell>
            <LeadCell><PointerIcon /></LeadCell>
            <Fit w={54} ml={104} dy={-0.5} bold>Walls</Fit>
          </Select>
        </Row>
        <Row $pl={20} $mt={19}>
          <IconSlot $w={51}><PencilIcon /></IconSlot>
          <Select w={385} ml={24}>
            <Fit w={52} ml={15} dy={1.5} bold>Lines</Fit>
            <Fit w={169} ml={6} dy={1.5} size={21}>............................</Fit>
            <Fit w={95} dy={1.5}>Shift-Ctrl-L</Fit>
          </Select>
        </Row>
        <Row $pl={20} $mt={19}>
          <IconSlot $w={51}><FunctionIcon /></IconSlot>
          <Select w={385} ml={24}>
            <Fit w={172} ml={10} dy={0} bold>Continuous Lines</Fit>
            <Fit w={102} ml={3} dy={1.5} size={21}>.................</Fit>
            <Fit w={49} dy={1.5}>Ctrl-1</Fit>
          </Select>
        </Row>
      </Section>

      <Section $h={150} $pt={24}>
        <Row $pl={29}>
          <CursorIcon />
          <IconSlot $w={46} $ml={25}><CornerFrame><GlyphBadge>T</GlyphBadge></CornerFrame></IconSlot>
          <Select w={230} ml={9}><Fit w={121} ml={33} dy={1}>Calibri (Body)</Fit></Select>
          <Select w={87} ml={8}><Fit w={33} ml={6} dy={1}>999</Fit></Select>
        </Row>
        <FormatRow>
          <FormatButton>B</FormatButton>
          <FormatButton $slab>I</FormatButton>
          <FormatButton $size={30}><UnderBar>U</UnderBar></FormatButton>
          <FormatButton $color="#ff0000">T</FormatButton>
          <FormatButton $color="#ff0000" $bg="#ffff00">T</FormatButton>
          <Align to="flex-start" /><Align to="center" /><Align to="flex-end" />
        </FormatRow>
      </Section>
    </Sidebar>
  );
}

/* ---------- main area ---------- */

const Main = styled.div`
  width: 2236px;
  flex: none;
  display: flex;
  flex-direction: column;
  border-right: 2px solid #000;
`;
const MenuBar = styled.header`
  display: flex;
  align-items: center;
  height: 37px;
  border-bottom: 2.5px solid #222;
  padding-left: 11px;
`;
const InfoBar = styled.div`
  display: flex;
  align-items: center;
  height: 60px;
  padding-left: 11px;
  background: #ffffcc;
  border-bottom: 2px solid #222;
`;
const Rule = styled.i<{ $ml: number }>`
  flex: none;
  width: 2px;
  height: 41px;
  margin-left: ${(p) => p.$ml}px;
  background: #000;
`;
const TabBar = styled.div`
  display: flex;
  height: 42px;
  background: #000;
  border-bottom: 2px solid #000;
  box-shadow: inset 0 -1px 0 #fff;
`;
const Tab = styled.div<{ $w: number; $ml?: number }>`
  display: flex;
  align-items: center;
  width: ${(p) => p.$w}px;
  height: 40px;
  margin-left: ${(p) => p.$ml ?? 0}px;
  background: #ffff99;
  border: 1px solid #000;
  border-radius: 8px 8px 0 0;
  overflow: hidden;
`;
const TabClose = styled.span`
  display: flex;
  align-items: center;
  justify-content: center;
  width: 40px;
  height: 100%;
  margin-left: auto;
  background: #ff6666;
  border-left: 1.5px solid #000;
`;
const Canvas = styled.div`
  height: 1096px;
  background: linear-gradient(#fff 45px, #f3f3f3 45px, #f3f3f3 46px, #fefefe 47px);
  border-right: 1px solid #000;
`;
const StatusBar = styled.div`
  flex: 1;
  background: #000;
`;

const Cross = () => (
  <svg width="24" height="24" viewBox="0 0 24 24"><path d="M1 1L23 23M23 1L1 23" stroke="#000" strokeWidth="1.800" /></svg>
);

/* ---------- floor plan ---------- */

const box = (...r: number[][]) => r.map(([a, b, c, d]) => `M${a} ${b}H${c}V${d}H${a}Z`).join("");
const range = (n: number) => Array.from({ length: n }, (_, i) => i);

const westWalls =
  "M170 209H440V222H748V247H860V345M170 209V360H250V345M250 212V298H362V212M252 300V355M295 300V360H362V300M365 212V354H436M438 222V345H745V222M542 222V340M638 222V340M748 247V345H830" +
  "M205 365V412H250V393H400V412H417V393H436M436 388H542M470 388V1188H542M570 388V820M570 855V880M570 960V1188M470 521H570M470 625H570M470 762H570M470 878H570M470 966H570M470 1048H570" +
  "M612 385V540M612 560V820M612 855V1188M612 388H672V452M612 455H712M712 452V818M712 455H750M785 445H822V558H714M822 400V452M760 380V440H822M612 515H712M860 345V400H822M612 650H712M714 818H950M612 820H712" +
  "M948 250H1062V442M948 250V398H966M966 400V818M1062 440V600M1062 660V818M966 442H1062M966 542H1062M966 692H1062M950 818H1062" +
  "M612 872H686V935H612M712 860H945M712 960H945V860M712 860V905H740M945 855H1062V965H945M995 855V965M1028 855V912M995 912H1062M945 970H1025V1030H950V970M1062 965V1188M853 960V1008H820V965M797 965V1005M758 965V990" +
  "M712 1188H1062M965 1105V1188M612 1090H712M612 1188H712M712 1090V1188M712 1112H750V1145H715M750 1145V1175M712 970V1030H745V1070H712V1090" +
  "M170 1228H250M170 1228V1374H250V1228M205 1225V1182H245V1215M250 1184H468M250 1262H290V1228H375M345 1240V1352M250 1352H436M375 1228L400 1262H435M436 1238V1358H785M470 1240V1292H445M505 1240V1300H628V1240M557 1300V1352M505 1300Q550 1310 555 1350M628 1240V1356M440 1238H530M612 1235H782V1370M712 1240V1352" +
  "M785 1238H1035V1370H785M880 1240V1368M958 1240V1368M1035 1238V1350H1145V1238";
const westDense =
  box([650, 555, 706, 575], [635, 600, 706, 608], [628, 645, 690, 656], [650, 515, 676, 525], [630, 540, 645, 560], [655, 562, 708, 598], [705, 388, 721, 398], [728, 1270, 745, 1350], [712, 1290, 728, 1335], [750, 1300, 758, 1330], [765, 1290, 780, 1325], [790, 816, 872, 824], [842, 1180, 858, 1188], [884, 1180, 900, 1188], [1060, 1318, 1068, 1326], [1087, 1318, 1095, 1326], [1114, 1318, 1122, 1326]) +
  box([440, 338, 474, 348], [508, 334, 535, 345], [610, 334, 636, 345], [560, 480, 570, 520], [560, 570, 570, 620], [560, 640, 570, 700], [560, 830, 570, 876], [950, 290, 958, 360], [612, 500, 620, 514], [720, 1182, 760, 1190], [675, 1240, 705, 1250], [880, 856, 930, 866], [960, 1110, 966, 1180]) +
  box(...range(3).flatMap((i) => [0, 1].map((j) => [838 + i * 33, 873 + j * 34, 858 + i * 33, 898 + j * 34])), [750, 888, 768, 907]) +
  box(...range(9).map((i) => [1045, 560 + i * 11, 1060, 566 + i * 11]));
const westThin =
  box([638, 613, 690, 640], [675, 685, 706, 710], [654, 780, 680, 808], [654, 942, 680, 975], [654, 875, 680, 915], [1030, 1080, 1060, 1145], [968, 1110, 980, 1185], [970, 255, 1025, 275], [960, 330, 1005, 340], [980, 560, 998, 590], [978, 695, 998, 740], [1022, 735, 1032, 750], [997, 780, 1007, 793], [815, 858, 838, 890], [655, 1062, 662, 1075], [932, 290, 948, 398], [1020, 570, 1035, 620], [1020, 630, 1035, 680], [1040, 300, 1055, 385], [1025, 338, 1045, 355]) +
  "M820 348H878V375H820M835 350L850 370L865 350M740 930L750 955L760 930L770 955L780 930M990 255V398M1040 270V395M780 908H825M945 1055H1030V1045M443 946H490M602 1067H655M950 596H968M660 700L675 720";

const gymWalls =
  "M322 320H1250V845H430M322 320V858H430V320M390 254H1384M413 254V320M422 320V253M480 255V320M1060 255V280M1060 300V320M1130 255V320M1190 262V300M1230 250V235H1268V250M1272 255V490M1384 253V940H1235V875H1384M1272 505V875H1384M1272 505H1384M1272 630H1384M1272 758H1384" +
  "M195 430H300V582H195ZM195 468H265V500M195 520H300M200 588H298V730H200ZM200 645H298M237 330H287V428H237M220 740H298V858H220ZM195 735V858H220M300 415H322M310 735V875H322M398 420V480L425 490V525H398V475M398 750L425 830M430 858H1035V915M1035 880H1190V940M1190 880V940M1115 880V915H1140V940H1190";
const gymThin =
  range(9).map((i) => `M445 ${343 + i * 9.6}H1217`).join("") +
  range(6).map((i) => `M600 ${762 + i * 11}H1085`).join("") +
  range(6).map((i) => `M${600 - i * 2} ${422 - i * 14}Q${510 - i * 9} ${430 - i * 14} ${492 - i * 7} ${540}V640Q${510 - i * 9} ${755 + i * 9} ${600 - i * 2} ${762 + i * 11}`).join("") +
  range(6).map((i) => `M${1080 + i * 2} ${422 - i * 14}Q${1170 + i * 9} ${430 - i * 14} ${1184 + i * 7} ${540}V640Q${1170 + i * 9} ${755 + i * 9} ${1080 + i * 2} ${762 + i * 11}`).join("") +
  box([593, 430, 1092, 757], [602, 437, 734, 750], [790, 437, 922, 750], [627, 485, 893, 705], [640, 502, 880, 690], [652, 515, 868, 675], [935, 425, 1087, 760], [943, 433, 1082, 752]) +
  [510, 1168].map((c) => box([c - 57, 387, c + 57, 455], [c - 50, 394, c + 50, 448], [c - 65, 437, c + 65, 750], [c - 57, 505, c + 57, 575], [c - 50, 512, c + 50, 568], [c - 57, 615, c + 57, 688], [c - 50, 622, c + 50, 680], [c - 57, 735, c + 57, 800], [c - 50, 742, c + 50, 793]) + `M${c - 20} 387V455M${c + 20} 387V455M${c} 387V800M${c - 20} 735V800M${c + 20} 735V800M${c - 20} 505V688M${c + 20} 505V688`).join("") +
  "M445 593H1215M445 540H592M445 648H592M627 540H870M593 655H935M593 648H935M947 560H1078M947 633H1078M545 343V430M630 343V420M1058 343V420M763 437V750M590 437V757M740 485V705M697 485V705M815 485V705M785 437V750" +
  [668, 855, 1012].map((c) => `M${c - 52} 437V475Q${c - 40} 530 ${c} 532Q${c + 40} 530 ${c + 52} 475V437M${c - 52} 750V715Q${c - 40} 660 ${c} 658Q${c + 40} 660 ${c + 52} 715V750M${c - 15} 437V530M${c + 15} 437V530M${c - 15} 657V750M${c + 15} 657V750M${c - 38} 485H${c + 38}M${c - 38} 705H${c + 38}`).join("") +
  [510, 1168].map((c) => `M${c - 40} 480Q${c - 30} 530 ${c} 532Q${c + 30} 530 ${c + 40} 480M${c - 40} 705Q${c - 30} 660 ${c} 658Q${c + 30} 660 ${c + 40} 705`).join("") +
  "M690 530Q717 560 717 593Q717 630 690 655M830 530Q805 560 805 593Q805 630 830 655" +
  box([335, 365, 410, 400], [255, 338, 273, 403], [207, 368, 231, 403], [225, 897, 338, 1035], [388, 897, 668, 1038], [205, 658, 232, 697], [527, 897, 557, 932]) +
  "M265 468H300M198 615H240V640M270 610H298M450 320V308M458 320V308M466 320V308M474 320V308";
const gymHeavyThin = "M410 375H830M410 390H830M947 437H1078V747H947ZM1252 350V840M1245 350V840";
const gymDense =
  box([590, 322, 930, 336], [615, 830, 910, 844], [738, 845, 858, 857], [462, 848, 498, 858], [588, 848, 620, 858], [1280, 253, 1384, 266], [1295, 275, 1307, 376], [1320, 275, 1334, 366], [1348, 275, 1362, 376], [1374, 265, 1384, 415], [1312, 412, 1365, 422], [1312, 440, 1365, 460], [1276, 482, 1384, 500], [1236, 475, 1250, 560], [1236, 600, 1250, 690], [1135, 280, 1165, 292], [1147, 265, 1158, 310]) +
  box(...[550, 585, 675, 708, 797, 832].map((y) => [1290, y, 1322, y + 22]), ...[524, 650, 775].map((y) => [1286, y, 1336, y + 14]), ...[524, 650, 775].map((y) => [1274, y, 1281, y + 96])) +
  box(...[515, 540, 565, 597, 640, 665, 690, 720, 765, 790, 815, 850].map((y) => [1355, y, 1378, y + 12])) +
  box(...[458, 506, 552, 690, 713, 760, 807].map((y) => [328, y, 382, y + 10]), [328, 420, 397, 430], [330, 628, 388, 650], [345, 655, 375, 668], [413, 575, 428, 610], [325, 575, 332, 700], [385, 575, 398, 700]) +
  box([738, 915, 850, 942], [762, 960, 815, 976], [748, 990, 838, 1012], [675, 930, 695, 965], [374, 965, 386, 1020], [1323, 985, 1350, 1002], [1355, 880, 1375, 905], [1098, 1005, 1160, 1011], [1245, 990, 1258, 1025], [905, 848, 1005, 857]);

const eastWalls =
  box([42, -7, 190, 97], [248, -7, 402, 97], [42, 140, 148, 247], [237, 252, 402, 366], [42, 252, 200, 366], [428, 180, 487, 362], [487, 180, 572, 362], [572, 177, 662, 362], [667, 177, 865, 357], [347, 408, 422, 508], [250, 412, 347, 508], [60, 412, 187, 508], [583, 940, 668, 1110], [585, 798, 687, 940], [1190, 357, 1300, 443], [1120, 388, 1188, 445], [1175, 465, 1275, 528], [1125, 550, 1320, 602]) +
  "M107 142V245M148 193H185M148 140H185V247M250 140H345V247H250ZM250 193H297V140M297 193V247M345 140H400V247H345M165 0V95M160 10H170M378 0V95M68 255V362M372 255V362M428 137H650M428 145H485V175M530 0V137M570 -3V137M570 137H667M815 -3V137M815 82L845 95M667 177H865V212H932" +
  "M60 510H187M60 510V887H310M330 887H583M347 510V885M230 412V508M187 412V508M120 510V660M145 770V850M60 800H120V838H60M60 845H130M165 755H290V880M165 755V850L150 885M60 552H125M83 597H120V655H83ZM290 770V880" +
  "M347 560L375 548L420 572V620H437V765L420 770V810L375 820L350 830M350 540H420M372 510V545M395 510V550M422 412V480M437 420V480M450 412H512V485H450ZM512 412H582V500H512M582 408H665V600M582 408V600H640M512 500V640H595V675H512M520 530V625M580 500V610L612 600V640M455 845L470 780V730L490 685H582M470 730H582M512 685V730M535 685V730M558 685V730M582 675V880M455 845V880M347 820H420V885M372 830V885M395 830V885M595 645V798M620 675H662V727H620ZM620 730H662V795H620ZM620 675V798M667 408V800M685 412V740M687 740V940M630 800V935M585 905H630V875H650V935M655 800V840H687M667 780H687" +
  "M80 937H280M368 935H583M80 937V1055H583M152 940V1055M217 940V1055M283 940V998H368V940M330 1000V1055M285 1000V1055M368 998V1055M435 940V1055M498 940V1055M615 945V1105M583 1012H612M583 1045H612M0 1050H80" +
  "M690 738H840M828 435H915M835 740H945M965 490L993 625H1038V655H1082V625H1125M993 625L978 622L975 672L960 680M918 545H930L945 585L930 638H918ZM1080 525V625M1122 335V625" +
  "M1262 -8V278M1293 70V278M1262 70H1293M1262 128H1293M1262 157H1293M1262 187H1293M1097 335V222M1097 262H1160V300H1140V335M1163 283H1320V335H1097M1163 283V335M1187 283V333M1213 283V333M1240 283V333M1267 283V333M1293 283V333M1320 335V445M1320 475V600M1160 550V602M1203 550V602M1230 550V602M1258 550V602M1290 550V602M1225 360V412H1272V360M1222 465V528M1293 40H1428M1293 92H1410M1097 -5V20H1168M1293 92V278";
const eastThin =
  box([868, 212, 932, 355], [911, 118, 985, 185], [999, 255, 1006, 330], [999, 450, 1006, 555], [712, 773, 733, 832], [687, -10, 716, 34], [103, 14, 125, 26], [297, 14, 319, 26], [135, 265, 153, 275], [279, 265, 297, 275], [115, 432, 135, 444], [292, 432, 312, 444], [598, 198, 633, 210], [1378, 52, 1393, 100], [195, 1012, 207, 1028], [80, 740, 95, 780], [67, 740, 80, 780], [88, 785, 104, 795], [152, 665, 168, 675], [142, 605, 146, 632], [153, 627, 167, 645], [1225, 470, 1272, 525], [1145, 465, 1155, 528], [47, 0, 180, 90], [253, 0, 392, 90]) +
  box(...[225, 265, 315].flatMap((y) => [[583, y, 595, y + 32], [637, y, 649, y + 32]])) +
  box(...[1000, 1042, 1080, 1117].map((x) => [x - 3, 660, x + 3, 687]), ...[1000, 1030, 1042, 1080, 1090, 1120].map((x) => [x - 3, 783, x + 3, 832])) +
  range(6).map((i) => `M${105 + i * 16} 355L${107 + i * 16} 332H${114 + i * 16}L${117 + i * 16} 355M${248 + i * 16} 355L${250 + i * 16} 332H${257 + i * 16}L${260 + i * 16} 355`).join("") +
  range(10).map((i) => `M${830 + i * 9} 438L${850 + i * 7} 530Q${854 + i * 7} 590 ${850 + i * 7} 650L${842 + i * 8} 740`).join("") +
  "M690 412H868M690 412V740M780 480L828 435M780 692L835 740M915 435H965V490M960 680L945 750M758 415V495M772 470L790 560V640L775 690M758 685V735M797 480L805 540L845 527M805 540V632L845 650M828 435L845 527M845 650L825 735M690 833H830V752M785 755H845M867 215V182M865 357V412M790 358H690" +
  "M1097 50Q1150 70 1150 137Q1150 205 1097 222M1097 70Q1135 85 1137 137Q1135 190 1097 205M1168 20V55L1130 25M1140 240L1168 205L1180 220V278H1262M1180 220V100M1410 40V260L1428 355M1414 260L1422 320M1320 278Q1350 290 1372 400M1330 276Q1358 300 1370 400" +
  "M637 437V555M645 437V555M653 437V555M668 965H690M1150 360H1170V375H1150V388M1128 395V415H1142M1190 395H1225M1245 350L1262 345" +
  box(...range(5).flatMap((i) => range(4).map((j) => [258 + i * 17, 595 + j * 26, 268 + i * 17, 612 + j * 26])), ...range(5).map((i) => [248 + i * 16, 565, 262 + i * 16, 584]), [258, 540, 278, 562], [286, 548, 306, 562], [315, 535, 328, 555], ...range(3).map((i) => [455 + i * 18, 432, 465 + i * 18, 440])) +
  "M176 838A14 18 0 1 0 204 838A14 18 0 1 0 176 838M180 825L200 850M200 825L180 850M148 580L165 552M255 680V750H340";
const eastDense =
  box([100, 356, 198, 369], [245, 356, 333, 369], [60, 409, 140, 420], [278, 409, 340, 420], [42, 356, 66, 370], [42, 92, 190, 99], [248, 92, 402, 99], [455, 878, 582, 890], [330, 882, 420, 890], [60, 882, 145, 890], [875, 18, 970, 38], [893, 60, 938, 76], [885, 92, 955, 114], [240, 878, 305, 890], [822, 0, 835, 80], [635, 360, 660, 372], [690, 355, 820, 360], [60, 620, 83, 640], [66, 590, 76, 670], [510, 530, 516, 620], [515, 666, 580, 678], [1180, 105, 1235, 111], [1180, 171, 1235, 177], [1377, 90, 1397, 102], [1308, 90, 1320, 128], [590, 955, 606, 990], [510, 855, 535, 875], [645, 965, 690, 973], [340, 510, 348, 770], [420, 440, 438, 480], [422, 812, 438, 870], [640, 612, 660, 635]) +
  box([165, 10, 170, 92], [180, 0, 190, 92], [378, 10, 384, 92], [394, 0, 402, 92], [560, 40, 568, 120], [658, 180, 666, 362], [484, 180, 490, 362], [66, 290, 76, 350], [364, 290, 374, 350]) +
  box(...[[190, 527], [213, 527], [190, 565], [213, 565], [205, 663], [228, 663], [205, 704], [228, 704]].map(([x, y]) => [x - 1, y, x + 13, y + 25])) +
  box(...range(3).map((i) => [242 + i * 14, 780, 250 + i * 14, 820]), ...range(3).map((i) => [242 + i * 14, 838, 250 + i * 14, 880])) +
  box([290, 452, 312, 502], [322, 452, 344, 502], [254, 450, 280, 462], [310, 770, 328, 838], [304, 785, 335, 808], [172, 755, 198, 778], [350, 150, 360, 190], [365, 180, 376, 240], [380, 200, 395, 235], [1225, 412, 1300, 420], [1235, 420, 1275, 442], [428, 295, 452, 326], [458, 295, 482, 326], [80, 553, 120, 585], [80, 803, 120, 838], [178, 440, 187, 508], [228, 460, 242, 508], [603, 925, 640, 945]);
const stairs =
  range(7).map((i) => `M${922 + i * 5} ${450 + i * 3}L${928 + i * 5} ${482}M${920 + i * 5} ${692}L${918 + i * 5} ${726 - i * 2}`).join("") +
  "M920 452L955 470M924 480L958 486M920 695L955 692M920 722L950 730M958 435L970 495M968 440L975 500M920 425L930 435L940 422L950 435L960 422L968 435M920 738L948 745M690 738L700 725L710 738L725 728L740 738L760 722L775 738L790 728L800 738";

const dimensions = "M50 208V1376M50 208H160M50 1376H160";
const pageDims =
  "M1385.500 483.300H1950M1385.500 483.300V530M1385.500 920V974M1385.500 963H2513.500M1385.500 973.500H2513.500" +
  "M1952 291H2514M1952 301H2514M1952 291V403M2514 291V345M2011 301V367M2059.500 301V345M1901.500 344.500H2044M1901.500 344.500V505M2514 344.500H2573M2562.500 344.500V780M2573 344.500V930.500";
const eastDims =
  "M1428 0V1243M1410 400V1183M978 620V1212M1038 660V1183M1082 690V1183M1124 620V1183M1320 602V1183M978 1180H1428M1010 658H1537M690 834H1537M675 1110H1537M690 967H724V1110M582 1055V1212M669 1110V1183M690 960V1212M582 1180H690M1428 42H1518M1410 94H1518M1320 273H1518M1320 601H1518M273 1055V1110";

const markers: [number, number, number][] = [
  [1495, 502, 180], [1712, 522, 180], [1844, 453, 180], [1368, 559, 90], [1447, 659, 0], [1448, 677, 90], [1448, 825, 180], [1360, 883, 90],
  [1570, 944, 0], [1823, 944, 0], [2115, 318, 180], [2392, 320, 180], [1927, 432, 90], [2546, 442, 270], [2467, 617, 0], [2547, 702, 270], [2405, 820, 0], [2208, 870, 270], [2147, 944, 0], [1969, 944, 0],
];

const Walls = styled.path`
  fill: none;
  stroke: #a0141e;
  stroke-width: 2.6;
  vector-effect: non-scaling-stroke;
`;
const WallJoints = styled(Walls)`
  stroke: #7a1a20;
  stroke-width: 3.6;
  stroke-dasharray: 7 16 3 11;
`;
const Thin = styled.path<{ $w?: number }>`
  fill: none;
  stroke: #8e2a32;
  stroke-width: ${(p) => p.$w ?? 1.35};
  vector-effect: non-scaling-stroke;
`;
const Dim = styled.path`
  fill: none;
  stroke: #8a484e;
  stroke-width: 1.5;
  vector-effect: non-scaling-stroke;
`;
const Axis = styled(Dim)`
  stroke-width: 1.2;
  stroke-dasharray: 14 8 3 8;
`;

const RoomDesks = ({ x }: { x: number }) => (
  <g fill="none" stroke="#8c2a30" strokeWidth="1.500">
    {[0, 1, 2, 3].map((i) => <path key={i} d={`M${x + 6 + i * 13} ${521 + (i % 3 ? -2 : 1)}l3 -4 5 1 1 5 -4 3z`} />)}
    {[0, 1, 2].map((i) => <path key={i} d={`M${x + 12 + i * 13} ${532 + (i === 1 ? -2 : 0)}l3 -4 5 1 1 5 -4 3z`} />)}
    <path d={`M${x + 20} 537h15v4h-15z`} />
  </g>
);

function Zone({ at, scale, children }: { at: [number, number]; scale: number; children: React.ReactNode }) {
  return <g transform={`translate(${at[0]} ${at[1]}) scale(${scale} .33333)`}>{children}</g>;
}

function FloorPlan() {
  return (
    <svg width="2233" height="1096" viewBox="945 197 2233 1096">
      <defs>
        <pattern id="hatch" width="9" height="18" patternUnits="userSpaceOnUse">
          <rect width="9" height="18" fill="#98121c" /><rect x="7.800" width="1" height="11" fill="#fff" opacity=".7" />
        </pattern>
      </defs>
      <Dim d={pageDims} />
      <Zone at={[1320, 460]} scale={0.39541}>
        <Dim d={dimensions} />
        <Axis d="M915 135V835M166 836H945V1410M1078 655V690H1100M1062 655H1078M1416 1210V1410M866 402L905 440L942 402" />
        <Thin d={westThin} />
        <path d={westDense} fill="#9c141e" />
        <Walls d={westWalls} /><WallJoints d={westWalls} />
      </Zone>
      <Zone at={[1730, 560]} scale={0.54847}>
        <Dim d={eastDims} />
        <Axis d="M30 355V390H993V720M993 0V390M415 0V320V390M273 1055V912H350V887" />
        <Thin d={eastThin} /><Thin d={stairs} />
        <path d={eastDense} fill="url(#hatch)" />
        <Walls d={eastWalls} /><WallJoints d={eastWalls} />
      </Zone>
      <Zone at={[1860, 260]} scale={0.47194}>
        <Axis d="M180 877H1415M767 210V320M767 437V760" />
        <Thin d={gymThin} /><Thin d={gymHeavyThin} $w={2.2} />
        <path d={gymDense} fill="url(#hatch)" />
        <Walls d={gymWalls} /><WallJoints d={gymWalls} />
        {[510, 668, 760, 855, 1012, 1168].map((c) => (
          <g key={c} fill="none" stroke="#6d2228" strokeWidth="3.500"><ellipse cx={c} cy="593" rx="15" ry="22" /><ellipse cx={c} cy="593" rx="8" ry="13" /></g>
        ))}
      </Zone>
      <g>
        <Walls d="M1753 505H1950M1753 505V546M1810 507V546M1824 507V546M1879 507V546M1894 507V546M1950 505V546" />
        <WallJoints d="M1753 545H1950M1753 506H1950" />
        <Thin d="M1739 520H1753M1739 520V545M1814 507V545M1818 507V545M1884 507V545M1889 507V545" />
        <RoomDesks x={1755} /><RoomDesks x={1825} /><RoomDesks x={1895} />
      </g>
      {markers.map(([x, y, a], i) => (
        <g key={i} transform={`translate(${x} ${y}) rotate(${a})`} fill="none" stroke="#8a484e" strokeWidth="1.300">
          <path d="M-7.200 -7H7.200V8H-7.200ZM-7.200 -7L0 -14L7.200 -7" />
        </g>
      ))}
      <g fill="none" stroke="#8a3a40" strokeWidth="1.200">
        <path d="M1643 677H1657V692H1643ZM1635 685L1650 670L1665 685L1650 699Z" />
        <circle cx="1691" cy="658.500" r="5" /><circle cx="1491" cy="775" r="5.300" /><circle cx="1553.500" cy="815.500" r="5.300" /><circle cx="1840.500" cy="922" r="5.300" />
        <path d="M1840.500 917V900" />
      </g>
      <circle cx="1629.600" cy="805.700" r="14.700" />
      <g transform="translate(2500 980) scale(.33333)" fill="none" stroke="#8e4048" strokeWidth="3.600">
        <path d="M160 233H290V242H372V216H497V170H536V134H562V122H838V259H803V371H740L706 380V328M160 233V264H230V418H160V462H556M230 341H290M290 302H347V354H290ZM290 354V462M320 242V268H312V302M342 242V302M347 328H768M428 328V462M466 216V328M466 242H838M656 122V328M592 328V415H638V402H676L686 376V348L678 336H704M686 376H704M592 415V445H587V470H556V410H592" />
        <path d="M497 216H536V187H562V134H583V122H618V134H638V234H656M656 173H768V328" strokeDasharray="18 5 5 5" />
        <circle cx="134" cy="556" r="23" stroke="#8e3a42" /><path d="M110 556H805M134 530V580" /><path d="M136 530V556" strokeWidth="8" />
      </g>
    </svg>
  );
}

function MainPanel() {
  return (
    <Main>
      <MenuBar>
        <Fit w={36} size={19.5} dy={2.5} bold>File</Fit>
        <Fit w={40} ml={51} size={19.5} dy={2.5} bold>Edit</Fit>
        <Fit w={49} ml={45} size={19.5} dy={2.5} bold>View</Fit>
        <Fit w={46} ml={43} size={19.5} dy={2.5} bold>Help</Fit>
      </MenuBar>
      <InfoBar>
        <Fit w={78} dy={2} size={19.5}>Room #:</Fit>
        <Box $w={122} $ml={2}><Fit w={98} ml={6} dy={2} size={19.5}>HRF - 2045</Fit></Box>
        <Fit w={114} ml={13} dy={2} size={19.5}>Room Name:</Fit>
        <Box $w={500} $ml={3}><Fit w={263} ml={7} dy={2} size={19.5}>West High School Gymnasium</Fit></Box>
        <Rule $ml={28} />
        <Fit w={46} ml={30} dy={2} size={19.5}>Area:</Fit>
        <Box $w={121} $ml={2}><Fit w={72} ml={19} dy={2} size={19.5}>1204.00</Fit></Box>
        <Fit w={87} ml={14} dy={2} size={19.5}>Area Unit:</Fit>
        <Select w={161} ml={2} bg="#fff"><Fit w={106} ml={6} dy={2} size={19.5}>Square Foot</Fit></Select>
        <Rule $ml={28} />
        <Fit w={28} ml={28} dy={2} size={19.5}>ID:</Fit>
        <Box $w={162} $ml={2}><Fit w={103} ml={4} dy={2} size={19.5}>AHU - 2045</Fit></Box>
        <Fit w={111} ml={13} dy={2} size={19.5}>Asset Name:</Fit>
        <Box $w={321} $ml={2}><Fit w={150} ml={7} dy={2} size={19.5}>Air Handling Unit</Fit></Box>
        <IconSlot $w={50} $ml={39}><ChipIcon /></IconSlot>
        <Fit w={85} ml={11} size={15.5} bold>Asset Info.</Fit>
      </InfoBar>
      <TabBar>
        <Tab $w={338}><Fit w={249} ml={24} dy={1} size={19.5}>Jefferson Elementary School</Fit><TabClose><Cross /></TabClose></Tab>
        <Tab $w={340} $ml={4}><Fit w={172} ml={63} dy={1} size={19.5}>Central High School</Fit><TabClose><Cross /></TabClose></Tab>
      </TabBar>
      <Canvas><FloorPlan /></Canvas>
      <StatusBar />
    </Main>
  );
}

export default function App() {
  return (
    <>
      <GlobalStyle />
      <Page>
        <Workspace>
          <Callouts />
          <SidebarPanel />
          <MainPanel />
        </Workspace>
        <Footer><span>Scale: 1" = 60.23'</span><span>12/20/2024</span></Footer>
      </Page>
    </>
  );
}
